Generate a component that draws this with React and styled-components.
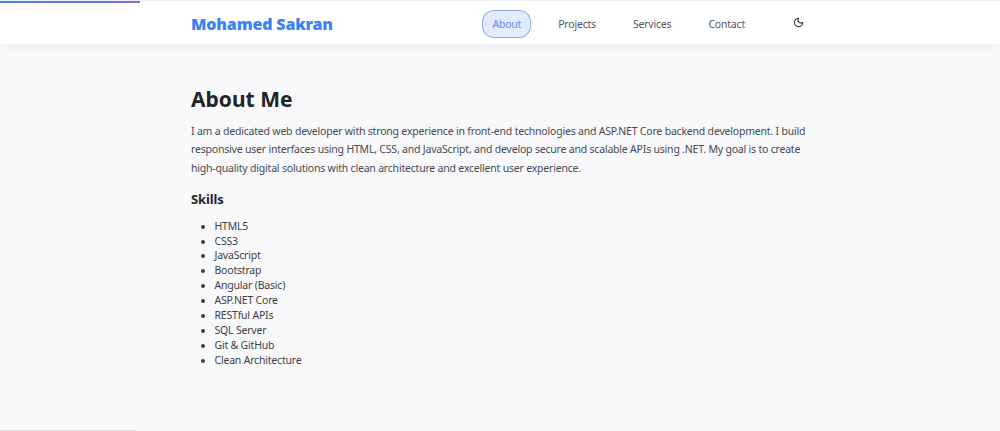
import React from 'react';
import styled, { createGlobalStyle } from 'styled-components';
import { Moon } from 'lucide-react';

const GlobalStyle = createGlobalStyle`
  html, body {
    margin: 0;
    padding: 0;
    height: 100%;
    overflow: hidden;
    background: #f9f9fc;
    font-family: 'Noto Sans', 'Open Sans', sans-serif;
  }
`;

const Page = styled.div`
  position: relative;
  height: 431px;
  overflow: hidden;
`;

const ProgressTrack = styled.div`
  position: absolute;
  top: 0;
  left: 0;
  right: 0;
  height: 1px;
  background: #eeeff2;
  z-index: 2;
`;

const ProgressBar = styled.div`
  width: 140px;
  height: 2px;
  margin-top: 1px;
  background: linear-gradient(90deg, #4f86ee, #7f6fe0);
`;

const BottomScroll = styled.div`
  position: absolute;
  left: 0;
  bottom: 0;
  width: 136px;
  height: 1px;
  background: #dddfe3;
`;

const Header = styled.header`
  height: 44px;
  background: #fff;
  box-shadow: 0 2px 10px rgba(0, 0, 0, 0.05);
`;

const Nav = styled.nav`
  width: 618px;
  height: 100%;
  margin: 0 auto;
  display: flex;
  align-items: center;
  justify-content: space-between;
  box-sizing: border-box;
  padding-top: 3px;
`;

const Logo = styled.a`
  font-size: 16px;
  font-weight: 900;
  letter-spacing: -0.17px;
  color: #3b82f6;
  text-decoration: none;
`;

const NavList = styled.div`
  display: flex;
  align-items: center;
  gap: 17px;
`;

const NavItem = styled.a`
  display: block;
  height: 28px;
  line-height: 28px;
  box-sizing: border-box;
  padding: 0 10px;
  font-size: 10.5px;
  letter-spacing: -0.2px;
  color: ${(p) => (p.$active ? '#5a8ff5' : '#4f565f')};
  text-decoration: none;
  border-radius: 12px;
  background: ${(p) => (p.$active ? '#e4ebfd' : 'transparent')};
  box-shadow: ${(p) => (p.$active ? 'inset 0 0 0 1px #8fb1f6' : 'none')};
`;

const ThemeButton = styled.button`
  display: flex;
  align-items: center;
  border: 0;
  padding: 0;
  margin: 0 5px 2px 21px;
  background: none;
  color: #333;
`;

const Main = styled.main`
  width: 618px;
  margin: 0 auto;
  padding-top: 42px;
`;

const Title = styled.h1`
  margin: 0 0 9.6px;
  font-size: 21px;
  line-height: 26px;
  font-weight: 700;
  color: #212529;
`;

const Intro = styled.p`
  margin: 0 0 11.4px;
  font-size: 10.5px;
  letter-spacing: -0.2px;
  line-height: 18.7px;
  color: #454b52;
`;

const Subtitle = styled.h2`
  margin: 0 0 9.5px;
  font-size: 13px;
  letter-spacing: -0.1px;
  line-height: 20px;
  font-weight: 700;
  color: #212529;
`;

const SkillList = styled.ul`
  margin: 0;
  padding-left: 23.5px;
  font-size: 10.5px;
  letter-spacing: -0.2px;
  line-height: 14.9px;
  color: #3a3f45;
`;

const links = ['About', 'Projects', 'Services', 'Contact'];
const skills = [
  'HTML5',
  'CSS3',
  'JavaScript',
  'Bootstrap',
  'Angular (Basic)',
  'ASP.NET Core',
  'RESTful APIs',
  'SQL Server',
  'Git & GitHub',
  'Clean Architecture',
];

export default function App() {
  return (
    <Page>
      <GlobalStyle />
      <ProgressTrack>
        <ProgressBar />
      </ProgressTrack>

      <Header>
        <Nav>
          <Logo href="#">Mohamed Sakran</Logo>
          <NavList>
            {links.map((link) => (
              <NavItem key={link} href="#" $active={link === 'About'}>
                {link}
              </NavItem>
            ))}
            <ThemeButton aria-label="Toggle theme">
              <Moon size={11} strokeWidth={2.4} />
            </ThemeButton>
          </NavList>
        </Nav>
      </Header>

      <Main>
        <Title>About Me</Title>
        <Intro>
          I am a dedicated web developer with strong experience in front-end technologies and ASP.NET Core backend
          development. I build responsive user interfaces using HTML, CSS, and JavaScript, and develop secure and
          scalable APIs using .NET. My goal is to create high-quality digital solutions with clean architecture and
          excellent user experience.
        </Intro>
        <Subtitle>Skills</Subtitle>
        <SkillList>
          {skills.map((skill) => (
            <li key={skill}>{skill}</li>
          ))}
        </SkillList>
      </Main>

      <BottomScroll />
    </Page>
  );
}
